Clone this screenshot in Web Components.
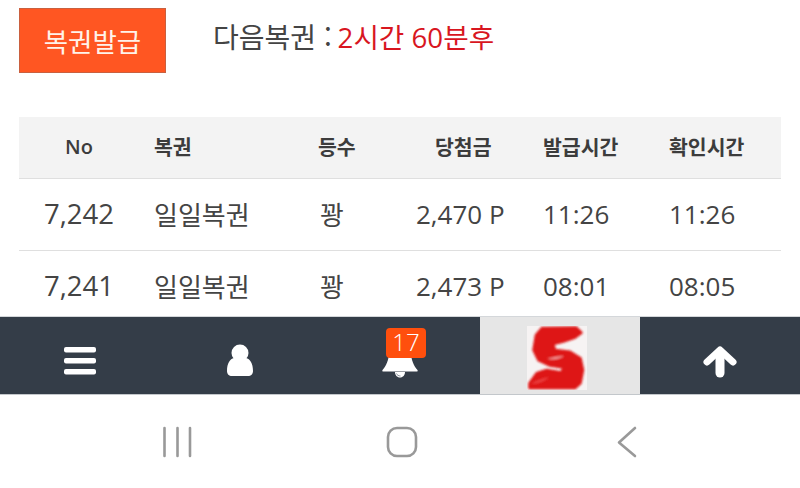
<!DOCTYPE html>
<html lang="ko">
<head>
<meta charset="utf-8">
<title>복권</title>
<style>
    html, body { margin: 0; height: 100%; background: #fff; }
    body { display: flex; flex-direction: column; height: 488px; overflow: hidden; font-family: "Open Sans", "Noto Sans CJK KR", sans-serif; }
</style>
</head>
<body>
<lotto-page>
    <lotto-top slot="top" next="2시간 60분후"></lotto-top>
    <lotto-row head no="No" name="복권" grade="등수" prize="당첨금" issued="발급시간" checked="확인시간"></lotto-row>
    <lotto-row no="7,242" name="일일복권" grade="꽝" prize="2,470 P" issued="11:26" checked="11:26"></lotto-row>
    <lotto-row no="7,241" name="일일복권" grade="꽝" prize="2,473 P" issued="08:01" checked="08:05"></lotto-row>
</lotto-page>
<tab-bar></tab-bar>
<system-nav></system-nav>

<script>
// Pagina: zona de contenido recortada, la barra de abajo la tapa
class LottoPage extends HTMLElement {
    constructor() {
        super();
        this.attachShadow({ mode: "open" });
        this.shadowRoot.innerHTML = `
            <style>
                :host { display: block; height: 317px; overflow: hidden; padding: 0 19px; box-sizing: border-box; }
                .table { margin-top: 44px; }
            </style>
            <slot name="top"></slot>
            <div class="table"><slot></slot></div>
        `;
    }
}

// Boton de emitir y cuenta atras
class LottoTop extends HTMLElement {
    constructor() {
        super();
        this.attachShadow({ mode: "open" });
        this.shadowRoot.innerHTML = `
            <style>
                :host { display: flex; align-items: center; padding-top: 8px; color: #444; font-family: "Noto Sans CJK KR", sans-serif; }
                button {
                    width: 147px; height: 65px; box-sizing: border-box; padding: 0 0 1px;
                    background: #ff5622; border: 1px solid #c9603f; color: #fff3ea;
                    font: 400 26.5px "Noto Sans CJK KR", sans-serif;
                }
                .next { margin: -9px 0 0 47px; font-size: 28px; line-height: 40px; white-space: nowrap; }
                .next b { font-weight: 400; color: #d8161f; font-size: 27.7px; margin-left: -2px; font-family: "Open Sans", "Noto Sans CJK KR", sans-serif; }
            </style>
            <button>복권발급</button>
            <div class="next">다음복권 : <b></b></div>
        `;
        this.shadowRoot.querySelector("b").textContent = this.getAttribute("next");
    }
}

// Fila de la tabla, cabecera si lleva el atributo head
class LottoRow extends HTMLElement {
    constructor() {
        super();
        this.attachShadow({ mode: "open" });
        this.shadowRoot.innerHTML = `
            <style>
                :host {
                    display: grid;
                    grid-template-columns: 120px 179px 97px 127px 126px 113px;
                    align-items: center;
                    height: 72px; box-sizing: border-box; padding-bottom: 2px;
                    border-bottom: 1px solid #dfdfdf;
                    color: #444; font: 400 26px "Open Sans", "Noto Sans CJK KR", sans-serif;
                    white-space: nowrap;
                }
                :host([head]) {
                    height: 62px; background: #f3f3f3; color: #3c3c3c;
                    font: 700 20.5px "Open Sans", "Noto Sans CJK KR", sans-serif;
                    padding-bottom: 3px;
                }
                span { display: block; }
                .no { text-align: center; font-size: 27.5px; }
                .name { padding-left: 15px; }
                .grade { padding-left: 2px; }
                .prize { margin-left: 1px; }
                .issued { margin-left: 1px; }
                .checked { margin-left: 1px; }
                :host([head]) .no { font-size: 20px; font-weight: 600; }
                :host([head]) .name { padding-left: 15px; }
                :host([head]) .grade { padding-left: 0; }
                :host([head]) .prize { padding-left: 19px; }
            </style>
            <span class="no"></span><span class="name"></span><span class="grade"></span>
            <span class="prize"></span><span class="issued"></span><span class="checked"></span>
        `;
        for (const key of ["no", "name", "grade", "prize", "issued", "checked"]) {
            this.shadowRoot.querySelector("." + key).textContent = this.getAttribute(key);
        }
    }
}

// Barra inferior oscura del sitio
class TabBar extends HTMLElement {
    constructor() {
        super();
        this.attachShadow({ mode: "open" });
        this.shadowRoot.innerHTML = `
            <style>
                :host {
                    display: grid; grid-template-columns: repeat(5, 160px);
                    height: 77px; position: relative;
                    background: #343d48;
                    box-shadow: 0 1px 0 #c3c7cb, 0 -1px 0 #d4d7da;
                    font-family: "Open Sans", sans-serif;
                }
                .cell { display: flex; align-items: center; justify-content: center; position: relative; }
                .logo { background: #e6e6e6; }
                svg { display: block; }
                .badge {
                    position: absolute; left: 66px; top: 11px; width: 40px; height: 30px;
                    background: #ff4f0d; border-radius: 4px; color: #fff;
                    font-size: 24px; line-height: 27px; text-align: center; font-weight: 300;
                }
            </style>
            <div class="cell">
                <svg width="34" height="30" viewBox="0 0 34 30" fill="#fff" style="margin-top:10px">
                    <rect x="1" y="1" width="32" height="5.500" rx="2"/>
                    <rect x="1" y="12" width="32" height="5.500" rx="2"/>
                    <rect x="1" y="23" width="32" height="5.500" rx="2"/>
                </svg>
            </div>
            <div class="cell">
                <svg width="28" height="33" viewBox="0 0 28 33" fill="#fff" style="margin-top:10px">
                    <circle cx="14" cy="9" r="8.500"/>
                    <path d="M1 27c0-8 3-12 7-13c2 1.500 4 2 6 2s4-.5 6-2c4 1 7 5 7 13c0 3-2 5-5 5H6c-3 0-5-2-5-5z"/>
                </svg>
            </div>
            <div class="cell">
                <svg width="36" height="42" viewBox="0 0 36 42" fill="#fff" style="margin:3px 0 0 0">
                    <path d="M18 2c7 0 11 6 11 14c0 8 3 14 6.500 18c.5 1 0 1.500-1 1.500H1.500c-1 0-1.500-.5-1-1.500C4 30 7 24 7 16C7 8 11 2 18 2z"/>
                    <path d="M13 36h10c0 3-2 5.500-5 5.500s-5-2.500-5-5.500z"/>
                    <path d="M14.500 37.500c.5 1.500 2 2.500 4 2.500" fill="none" stroke="#8a929b" stroke-width="1"/>
                </svg>
                <span class="badge">17</span>
            </div>
            <div class="cell logo">
                <svg width="60" height="64" viewBox="0 0 60 64" style="margin:5px 0 0 -6px">
                    <defs><filter id="soft" x="-10%" y="-10%" width="120%" height="120%"><feGaussianBlur stdDeviation="1"/></filter></defs>
                    <rect width="60" height="64" fill="#f6f3f3"/>
                    <g filter="url(#soft)">
                        <path fill="#de1616" stroke="#de1616" stroke-width="2.500" stroke-linejoin="round" d="M15 2 49 1.500 54.500 6.700 48 11.500 36.300 15.500 26.300 18 28 24 43 25.700 53.500 32.300 56 44 53.500 57 48 62 2.500 62 2.500 57.300 9.700 47.300 19.700 44 34.700 46.500 36.300 41.500 23 39.500 11.300 34 6.500 24 9 9z"/>
                        <path fill="#f5b5b5" d="M20 33c6-2 12-3 17-3-4 3-10 4-17 3z" opacity=".8"/>
                        <path fill="#ef5050" d="M4 58c6-4 12-6 18-7-4 4-10 7-18 7z" opacity=".7"/>
                    </g>
                </svg>
            </div>
            <div class="cell">
                <svg width="34" height="32" viewBox="0 0 34 32" fill="none" stroke="#fff" stroke-linecap="round" stroke-linejoin="round" style="margin-top:12px">
                    <path d="M17 27V6" stroke-width="9"/>
                    <path d="M4 16 17 4l13 12" stroke-width="7"/>
                </svg>
            </div>
        `;
    }
}

// Botones del sistema Android
class SystemNav extends HTMLElement {
    constructor() {
        super();
        this.attachShadow({ mode: "open" });
        this.shadowRoot.innerHTML = `
            <style>
                :host { display: flex; height: 94px; padding-top: 32px; box-sizing: border-box; background: #fff; }
                svg { display: block; fill: none; stroke: #999; stroke-width: 2.6; stroke-linecap: round; stroke-linejoin: round; }
                .a { margin-left: 162px; }
                .b { margin-left: 193px; }
                .c { margin-left: 199px; }
            </style>
            <svg class="a" width="31" height="32" viewBox="0 0 31 32"><path d="M2.500 2v28M15.500 2v28M28 2v28"/></svg>
            <svg class="b" width="32" height="32" viewBox="0 0 32 32"><rect x="2" y="2" width="28" height="28" rx="9"/></svg>
            <svg class="c" width="21" height="32" viewBox="0 0 21 32"><path d="M18 2 2 16.500 18 30"/></svg>
        `;
    }
}

customElements.define("lotto-page", LottoPage);
customElements.define("lotto-top", LottoTop);
customElements.define("lotto-row", LottoRow);
customElements.define("tab-bar", TabBar);
customElements.define("system-nav", SystemNav);
</script>
</body>
</html>
